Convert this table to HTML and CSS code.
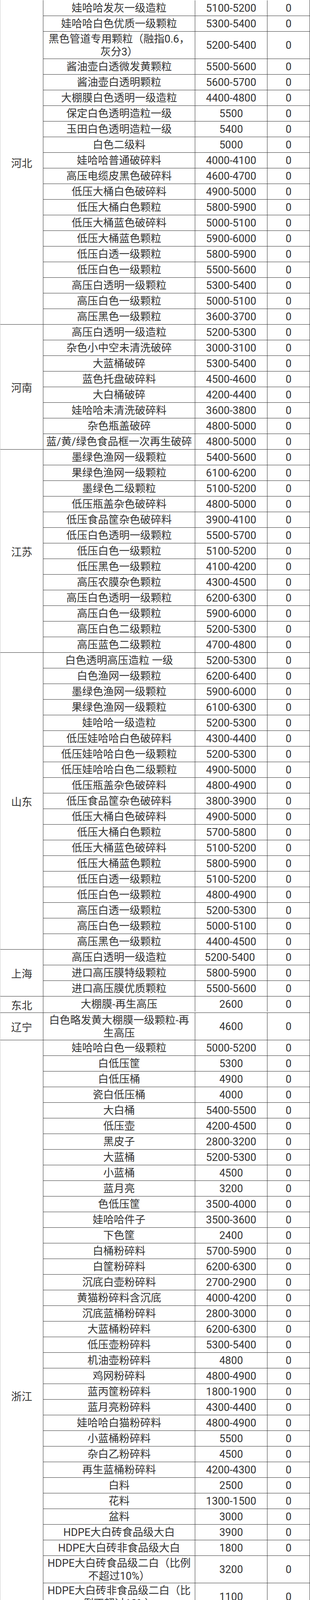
FILE: index.html
```html
<!DOCTYPE html>
<html lang="zh-CN">
<head>
<meta charset="utf-8">
<title>再生料报价</title>
<link rel="stylesheet" href="styles.css">
</head>
<body>
<div class="sheet">

<div class="block first">
  <div class="region">河北</div>
  <div class="rows">
    <div class="row"><div class="name">娃哈哈发灰一级造粒</div><div class="price">5100-5200</div><div class="chg">0</div></div>
    <div class="row"><div class="name">娃哈哈白色优质一级颗粒</div><div class="price">5300-5400</div><div class="chg">0</div></div>
    <div class="row dbl"><div class="name">黑色管道专用颗粒（融指0.6，<br>灰分3）</div><div class="price">5200-5400</div><div class="chg">0</div></div>
    <div class="row"><div class="name">酱油壶白透微发黄颗粒</div><div class="price">5500-5600</div><div class="chg">0</div></div>
    <div class="row"><div class="name">酱油壶白透明颗粒</div><div class="price">5600-5700</div><div class="chg">0</div></div>
    <div class="row"><div class="name">大棚膜白色透明一级造粒</div><div class="price">4400-4800</div><div class="chg">0</div></div>
    <div class="row"><div class="name">保定白色透明造粒一级</div><div class="price">5500</div><div class="chg">0</div></div>
    <div class="row"><div class="name">玉田白色透明造粒一级</div><div class="price">5400</div><div class="chg">0</div></div>
    <div class="row"><div class="name">白色二级料</div><div class="price">5000</div><div class="chg">0</div></div>
    <div class="row"><div class="name">娃哈哈普通破碎料</div><div class="price">4000-4100</div><div class="chg">0</div></div>
    <div class="row"><div class="name">高压电缆皮黑色破碎料</div><div class="price">4600-4700</div><div class="chg">0</div></div>
    <div class="row"><div class="name">低压大桶白色破碎料</div><div class="price">4900-5000</div><div class="chg">0</div></div>
    <div class="row"><div class="name">低压大桶白色颗粒</div><div class="price">5800-5900</div><div class="chg">0</div></div>
    <div class="row"><div class="name">低压大桶蓝色破碎料</div><div class="price">5000-5100</div><div class="chg">0</div></div>
    <div class="row"><div class="name">低压大桶蓝色颗粒</div><div class="price">5900-6000</div><div class="chg">0</div></div>
    <div class="row"><div class="name">低压白透一级颗粒</div><div class="price">5800-5900</div><div class="chg">0</div></div>
    <div class="row"><div class="name">低压白色一级颗粒</div><div class="price">5500-5600</div><div class="chg">0</div></div>
    <div class="row"><div class="name">高压白透明一级颗粒</div><div class="price">5300-5400</div><div class="chg">0</div></div>
    <div class="row"><div class="name">高压白色一级颗粒</div><div class="price">5000-5100</div><div class="chg">0</div></div>
    <div class="row"><div class="name">高压黑色一级颗粒</div><div class="price">3600-3700</div><div class="chg">0</div></div>
  </div>
</div>

<div class="block">
  <div class="region">河南</div>
  <div class="rows">
    <div class="row"><div class="name">高压白透明一级造粒</div><div class="price">5200-5300</div><div class="chg">0</div></div>
    <div class="row"><div class="name">杂色小中空未清洗破碎</div><div class="price">3000-3100</div><div class="chg">0</div></div>
    <div class="row"><div class="name">大蓝桶破碎</div><div class="price">5300-5400</div><div class="chg">0</div></div>
    <div class="row"><div class="name">蓝色托盘破碎料</div><div class="price">4500-4600</div><div class="chg">0</div></div>
    <div class="row"><div class="name">大白桶破碎</div><div class="price">4200-4400</div><div class="chg">0</div></div>
    <div class="row"><div class="name">娃哈哈未清洗破碎料</div><div class="price">3600-3800</div><div class="chg">0</div></div>
    <div class="row"><div class="name">杂色瓶盖破碎</div><div class="price">4800-5000</div><div class="chg">0</div></div>
    <div class="row"><div class="name">蓝/黄/绿色食品框一次再生破碎</div><div class="price">4800-5000</div><div class="chg">0</div></div>
  </div>
</div>

<div class="block">
  <div class="region">江苏</div>
  <div class="rows">
    <div class="row"><div class="name">墨绿色渔网一级颗粒</div><div class="price">5400-5600</div><div class="chg">0</div></div>
    <div class="row"><div class="name">果绿色渔网一级颗粒</div><div class="price">6100-6200</div><div class="chg">0</div></div>
    <div class="row"><div class="name">墨绿色二级颗粒</div><div class="price">5100-5200</div><div class="chg">0</div></div>
    <div class="row"><div class="name">低压瓶盖杂色破碎料</div><div class="price">4800-5000</div><div class="chg">0</div></div>
    <div class="row"><div class="name">低压食品筐杂色破碎料</div><div class="price">3900-4100</div><div class="chg">0</div></div>
    <div class="row"><div class="name">低压白色透明一级颗粒</div><div class="price">5500-5700</div><div class="chg">0</div></div>
    <div class="row"><div class="name">低压白色一级颗粒</div><div class="price">5100-5200</div><div class="chg">0</div></div>
    <div class="row"><div class="name">低压黑色一级颗粒</div><div class="price">4100-4200</div><div class="chg">0</div></div>
    <div class="row"><div class="name">高压农膜杂色颗粒</div><div class="price">4300-4500</div><div class="chg">0</div></div>
    <div class="row"><div class="name">高压白色透明一级颗粒</div><div class="price">6200-6300</div><div class="chg">0</div></div>
    <div class="row"><div class="name">高压白色一级颗粒</div><div class="price">5900-6000</div><div class="chg">0</div></div>
    <div class="row"><div class="name">高压白色二级颗粒</div><div class="price">5200-5300</div><div class="chg">0</div></div>
    <div class="row"><div class="name">高压蓝色二级颗粒</div><div class="price">4700-4800</div><div class="chg">0</div></div>
  </div>
</div>

<div class="block">
  <div class="region">山东</div>
  <div class="rows">
    <div class="row"><div class="name">白色透明高压造粒 一级</div><div class="price">5200-5300</div><div class="chg">0</div></div>
    <div class="row"><div class="name">白色渔网一级颗粒</div><div class="price">6200-6400</div><div class="chg">0</div></div>
    <div class="row"><div class="name">墨绿色渔网一级颗粒</div><div class="price">5900-6000</div><div class="chg">0</div></div>
    <div class="row"><div class="name">果绿色渔网一级颗粒</div><div class="price">6100-6300</div><div class="chg">0</div></div>
    <div class="row"><div class="name">娃哈哈一级造粒</div><div class="price">5200-5300</div><div class="chg">0</div></div>
    <div class="row"><div class="name">低压娃哈哈白色破碎料</div><div class="price">4300-4400</div><div class="chg">0</div></div>
    <div class="row"><div class="name">低压娃哈哈白色一级颗粒</div><div class="price">5200-5300</div><div class="chg">0</div></div>
    <div class="row"><div class="name">低压娃哈哈白色二级颗粒</div><div class="price">4900-5000</div><div class="chg">0</div></div>
    <div class="row"><div class="name">低压瓶盖杂色破碎料</div><div class="price">4800-4900</div><div class="chg">0</div></div>
    <div class="row"><div class="name">低压食品筐杂色破碎料</div><div class="price">3800-3900</div><div class="chg">0</div></div>
    <div class="row"><div class="name">低压大桶白色破碎料</div><div class="price">4900-5000</div><div class="chg">0</div></div>
    <div class="row"><div class="name">低压大桶白色颗粒</div><div class="price">5700-5800</div><div class="chg">0</div></div>
    <div class="row"><div class="name">低压大桶蓝色破碎料</div><div class="price">5100-5200</div><div class="chg">0</div></div>
    <div class="row"><div class="name">低压大桶蓝色颗粒</div><div class="price">5800-5900</div><div class="chg">0</div></div>
    <div class="row"><div class="name">低压白透一级颗粒</div><div class="price">5100-5200</div><div class="chg">0</div></div>
    <div class="row"><div class="name">低压白色一级颗粒</div><div class="price">4800-4900</div><div class="chg">0</div></div>
    <div class="row"><div class="name">高压白透一级颗粒</div><div class="price">5200-5300</div><div class="chg">0</div></div>
    <div class="row"><div class="name">高压白色一级颗粒</div><div class="price">5000-5100</div><div class="chg">0</div></div>
    <div class="row"><div class="name">高压黑色一级颗粒</div><div class="price">4400-4500</div><div class="chg">0</div></div>
  </div>
</div>

<div class="block">
  <div class="region">上海</div>
  <div class="rows">
    <div class="row"><div class="name">高压白透明一级造粒</div><div class="price">5200-5400&nbsp;</div><div class="chg">0</div></div>
    <div class="row"><div class="name">进口高压膜特级颗粒</div><div class="price">5800-5900</div><div class="chg">0</div></div>
    <div class="row"><div class="name">进口高压膜优质颗粒</div><div class="price">5500-5600</div><div class="chg">0</div></div>
  </div>
</div>

<div class="block">
  <div class="region">东北</div>
  <div class="rows">
    <div class="row"><div class="name">大棚膜-再生高压</div><div class="price">2600</div><div class="chg">0</div></div>
  </div>
</div>

<div class="block">
  <div class="region">辽宁</div>
  <div class="rows">
    <div class="row dbl"><div class="name">白色略发黄大棚膜一级颗粒-再<br>生高压</div><div class="price">4600</div><div class="chg">0</div></div>
  </div>
</div>

<div class="block">
  <div class="region">浙江</div>
  <div class="rows">
    <div class="row"><div class="name">娃哈哈白色一级颗粒</div><div class="price">5000-5200</div><div class="chg">0</div></div>
    <div class="row"><div class="name">白低压筐</div><div class="price">5300</div><div class="chg">0</div></div>
    <div class="row"><div class="name">白低压桶</div><div class="price">4900</div><div class="chg">0</div></div>
    <div class="row"><div class="name">瓷白低压桶</div><div class="price">4000</div><div class="chg">0</div></div>
    <div class="row"><div class="name">大白桶</div><div class="price">5400-5500</div><div class="chg">0</div></div>
    <div class="row"><div class="name">低压壶</div><div class="price">4200-4500</div><div class="chg">0</div></div>
    <div class="row"><div class="name">黑皮子</div><div class="price">2800-3200</div><div class="chg">0</div></div>
    <div class="row"><div class="name">大蓝桶</div><div class="price">5200-5300</div><div class="chg">0</div></div>
    <div class="row"><div class="name">小蓝桶</div><div class="price">4500</div><div class="chg">0</div></div>
    <div class="row"><div class="name">蓝月亮</div><div class="price">3200</div><div class="chg">0</div></div>
    <div class="row"><div class="name">色低压筐</div><div class="price">3500-4000</div><div class="chg">0</div></div>
    <div class="row"><div class="name">娃哈哈件子</div><div class="price">3500-3600</div><div class="chg">0</div></div>
    <div class="row"><div class="name">下色筐</div><div class="price">2400</div><div class="chg">0</div></div>
    <div class="row"><div class="name">白桶粉碎料</div><div class="price">5700-5900</div><div class="chg">0</div></div>
    <div class="row"><div class="name">白筐粉碎料</div><div class="price">6200-6300</div><div class="chg">0</div></div>
    <div class="row"><div class="name">沉底白壶粉碎料</div><div class="price">2700-2900</div><div class="chg">0</div></div>
    <div class="row"><div class="name">黄猫粉碎料含沉底</div><div class="price">4000-4200</div><div class="chg">0</div></div>
    <div class="row"><div class="name">沉底蓝桶粉碎料</div><div class="price">2800-3000</div><div class="chg">0</div></div>
    <div class="row"><div class="name">大蓝桶粉碎料</div><div class="price">6200-6300</div><div class="chg">0</div></div>
    <div class="row"><div class="name">低压壶粉碎料</div><div class="price">5300-5400</div><div class="chg">0</div></div>
    <div class="row"><div class="name">机油壶粉碎料</div><div class="price">4800</div><div class="chg">0</div></div>
    <div class="row"><div class="name">鸡网粉碎料</div><div class="price">4800-4900</div><div class="chg">0</div></div>
    <div class="row"><div class="name">蓝丙筐粉碎料</div><div class="price">1800-1900</div><div class="chg">0</div></div>
    <div class="row"><div class="name">蓝月亮粉碎料</div><div class="price">4300-4400</div><div class="chg">0</div></div>
    <div class="row"><div class="name">娃哈哈白猫粉碎料</div><div class="price">4800-4900</div><div class="chg">0</div></div>
    <div class="row"><div class="name">小蓝桶粉碎料</div><div class="price">5500</div><div class="chg">0</div></div>
    <div class="row"><div class="name">杂白乙粉碎料</div><div class="price">4500</div><div class="chg">0</div></div>
    <div class="row"><div class="name">再生蓝桶粉碎料</div><div class="price">4200-4300</div><div class="chg">0</div></div>
    <div class="row"><div class="name">白料</div><div class="price">2500</div><div class="chg">0</div></div>
    <div class="row"><div class="name">花料</div><div class="price">1300-1500</div><div class="chg">0</div></div>
    <div class="row"><div class="name">盆料</div><div class="price">3000</div><div class="chg">0</div></div>
    <div class="row"><div class="name">HDPE大白砖食品级大白</div><div class="price">3900</div><div class="chg">0</div></div>
    <div class="row"><div class="name">HDPE大白砖非食品级大白</div><div class="price">1800</div><div class="chg">0</div></div>
    <div class="row dbl"><div class="name">HDPE大白砖食品级二白（比例<br>不超过10%）</div><div class="price">3200</div><div class="chg">0</div></div>
    <div class="row dbl"><div class="name">HDPE大白砖非食品级二白（比<br>例不超过10%）</div><div class="price">1100</div><div class="chg">0</div></div>
    <div class="row"><div class="name">HDPE二白砖食品级</div><div class="price">3500</div><div class="chg">0</div></div>
    <div class="row"><div class="name">HDPE二白砖非食品级</div><div class="price">1400</div><div class="chg">0</div></div>
    <div class="row"><div class="name">低压白透一级颗粒</div><div class="price">5800-5900</div><div class="chg">0</div></div>
    <div class="row"><div class="name">低压白色一级颗粒</div><div class="price">5400-5500</div><div class="chg">0</div></div>
    <div class="row"><div class="name">低压黑色一级颗粒</div><div class="price">5000-5200</div><div class="chg">0</div></div>
    <div class="row"><div class="name">高压白透明一级造粒</div><div class="price">6300-6400</div><div class="chg">0</div></div>
    <div class="row"><div class="name">高压白色一级颗粒</div><div class="price">6000-6200</div><div class="chg">0</div></div>
    <div class="row"><div class="name">高压黑色一级颗粒</div><div class="price">5000-5100</div><div class="chg">0</div></div>
    <div class="row"><div class="name">低压管道黑色颗粒</div><div class="price">5300-5400</div><div class="chg">0</div></div>
  </div>
</div>

<div class="block">
  <div class="region">四川</div>
  <div class="rows">
    <div class="row"><div class="name">低压小娃哈哈瓶破碎料</div><div class="price">4100-4200</div><div class="chg">0</div></div>
    <div class="row"><div class="name">低压大娃哈哈瓶破碎料</div><div class="price">4400-4500</div><div class="chg">0</div></div>
  </div>
</div>

<div class="block">
  <div class="region">安徽</div>
  <div class="rows">
    <div class="row"><div class="name">娃哈哈乳白破碎料</div><div class="price">4200-4300</div><div class="chg">0</div></div>
    <div class="row"><div class="name">娃哈哈乳白颗粒</div><div class="price">5600-5700</div><div class="chg">0</div></div>
    <div class="row"><div class="name">低压机油壶杂色破碎</div><div class="price">3800-3900</div><div class="chg">0</div></div>
    <div class="row"><div class="name">低压瓶盖杂色破碎料</div><div class="price">4800-5000</div><div class="chg">0</div></div>
  </div>
</div>

<div class="block">
  <div class="region">湖北</div>
  <div class="rows">
    <div class="row"><div class="name">HDPE大白料</div><div class="price">1400</div><div class="chg">0</div></div>
    <div class="row"><div class="name">HDPE二白料</div><div class="price">900</div><div class="chg">0</div></div>
    <div class="row dbl"><div class="name">HDPE大白（纯大壶压块，不含<br>商标纸、瓶盖）</div><div class="price">4700</div><div class="chg">0</div></div>
    <div class="row dbl"><div class="name">HDPE大白（纯大壶破碎，不含<br>商标纸、瓶盖）</div><div class="price">5000</div><div class="chg">0</div></div>
    <div class="row"><div class="name">透明小白（纯透明娃哈哈压块）</div><div class="price">3900</div><div class="chg">0</div></div>
    <div class="row"><div class="name">透明小白（纯透明娃哈哈破碎）</div><div class="price">4500</div><div class="chg">0</div></div>
    <div class="row dbl"><div class="name">混合小白（纯透娃哈哈与奶白混<br>打压块）</div><div class="price">3500</div><div class="chg">0</div></div>
    <div class="row dbl"><div class="name">混合小白（纯透娃哈哈与奶白混<br>打破碎）</div><div class="price">4000</div><div class="chg">0</div></div>
    <div class="row"><div class="name">次白料压块</div><div class="price">3200</div><div class="chg">0</div></div>
    <div class="row"><div class="name">次白料破碎</div><div class="price">3400</div><div class="chg">0</div></div>
    <div class="row"><div class="name">花乙压块</div><div class="price">3200</div><div class="chg">0</div></div>
    <div class="row"><div class="name">花乙破碎</div><div class="price">3600</div><div class="chg">0</div></div>
  </div>
</div>

<div class="blank"></div>
<div class="title">ABS/PS再生料报价</div>

<div class="block">
  <div class="region">地区</div>
  <div class="rows">
    <div class="row"><div class="name">规格</div><div class="price">价格（元/吨）</div><div class="chg">涨跌</div></div>
  </div>
</div>

<div class="block">
  <div class="region">河北</div>
  <div class="rows">
    <div class="row dbl"><div class="name">文安 摩托车壳花色未退漆破碎<br>料</div><div class="price">5200-5400</div><div class="chg">0</div></div>
    <div class="row dbl"><div class="name">保定 摩托车壳破碎料花色未退<br>漆</div><div class="price">5000-5100</div><div class="chg">0</div></div>
    <div class="row dbl"><div class="name">灰白色PS破碎（玩具、小家<br>电）</div><div class="price">4200-4300</div><div class="chg">0</div></div>
    <div class="row"><div class="name">黑色PS破碎普通料</div><div class="price">3200-3300</div><div class="chg">0</div></div>
    <div class="row"><div class="name">PS花色破碎</div><div class="price">3600-3700</div><div class="chg">0</div></div>
    <div class="row"><div class="name">灰白ABS破碎</div><div class="price">4800-4900</div><div class="chg">0</div></div>
    <div class="row"><div class="name">ABS手电筒破碎料（一级回料）</div><div class="price">5900-6100</div><div class="chg">0</div></div>
    <div class="row"><div class="name">ABS黑色颗粒抗冲击8</div><div class="price">7000-7200</div><div class="chg">0</div></div>
    <div class="row"><div class="name">摩托车壳退漆破碎不含黑头</div><div class="price">6900-7100</div><div class="chg">0</div></div>
    <div class="row"><div class="name">米黄造粒（冲击10-11）</div><div class="price">7800-8000</div><div class="chg">0</div></div>
    <div class="row"><div class="name">ABS摩托车壳杂色破碎料</div><div class="price">5000-5100</div><div class="chg">0</div></div>
    <div class="row"><div class="name">电瓶壳黑色优质破碎</div><div class="price">5400-5600</div><div class="chg">0</div></div>
    <div class="row"><div class="name">改苯电视机壳黑色破碎料</div><div class="price">4200-4300</div><div class="chg">0</div></div>
    <div class="row"><div class="name">ABS白色一级颗粒</div><div class="price">8000-8300</div><div class="chg">0</div></div>
    <div class="row"><div class="name">ABS黑色一级不阻燃颗粒</div><div class="price">6800-7000</div><div class="chg">0</div></div>
  </div>
</div>

</div>
</body>
</html>
```

FILE: styles.css
```css
html, body {
  margin: 0;
  padding: 0;
  background: #ffffff;
}

body {
  font-family: Roboto, "Noto Sans CJK SC", sans-serif;
  font-size: 27px;
  color: #333333;
}

.sheet {
  width: 794px;
  box-sizing: border-box;
  border-left: 1px solid #c9c9c9;
  border-right: 1px solid #333333;
  border-bottom: 1px solid #333333;
}

.block {
  display: flex;
}

.region {
  width: 110px;
  flex: none;
  box-sizing: border-box;
  border-top: 1px solid #333333;
  border-right: 1px solid #333333;
  display: flex;
  align-items: center;
  justify-content: center;
  padding-top: 2px;
}

.rows {
  flex: 1;
  min-width: 0;
}

.row {
  display: flex;
  height: 40px;
  box-sizing: border-box;
  border-top: 1px solid #333333;
}

.row.dbl {
  height: 70px;
}

.block.first .region,
.block.first .row:first-child {
  border-top-color: transparent;
}

.name,
.price,
.chg {
  box-sizing: border-box;
  display: flex;
  align-items: center;
  justify-content: center;
  text-align: center;
  white-space: nowrap;
  line-height: 33px;
  padding-top: 2px;
}

.name {
  width: 389px;
  flex: none;
  border-right: 1px solid #333333;
}

.price {
  width: 185px;
  flex: none;
  border-right: 1px solid #333333;
}

.chg {
  flex: 1;
}

.blank {
  height: 40px;
  box-sizing: border-box;
  border-top: 1px solid #333333;
}

.title {
  height: 40px;
  box-sizing: border-box;
  border-top: 1px solid #333333;
  background: #4472c4;
  color: #ffffff;
  display: flex;
  align-items: center;
  justify-content: center;
  padding-top: 2px;
}
```
